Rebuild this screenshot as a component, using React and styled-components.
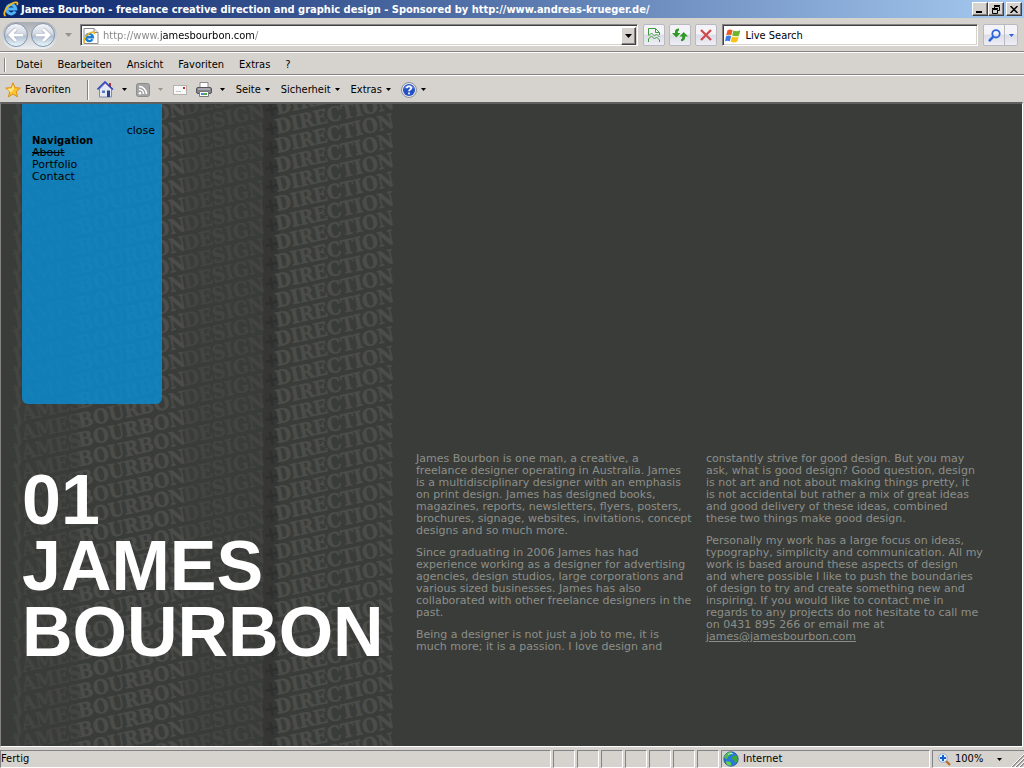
import React from "react";
import styled, { createGlobalStyle } from "styled-components";

const GlobalStyle = createGlobalStyle`
  * {
    box-sizing: border-box;
  }
  body {
    margin: 0;
    background: #d6d3ce;
    font-family: Tahoma, "DejaVu Sans Condensed", "DejaVu Sans", sans-serif;
    font-size: 11px;
    line-height: 14px;
    color: #000;
  }
  button, input {
    font: inherit;
    color: inherit;
    padding: 0;
    border: 0;
    background: none;
    border-radius: 0;
  }
  svg {
    display: block;
    flex: none;
  }
`;

const Window = styled.div`
  display: flex;
  flex-direction: column;
  min-height: 100vh;
`;

// ---------- title bar ----------

const TitleBar = styled.header`
  display: flex;
  align-items: center;
  gap: 2px;
  height: 18px;
  padding: 0 2px 0 3px;
  background: linear-gradient(90deg, #0a246a, #a6caf0);
  color: #fff;
`;

const Title = styled.h1`
  flex: 1;
  margin: 0;
  padding-top: 1px;
  font-size: 11px;
  font-weight: bold;
  white-space: nowrap;
`;

const CaptionButton = styled.button`
  display: flex;
  align-items: center;
  justify-content: center;
  width: 16px;
  height: 14px;
  margin-left: ${(props) => (props.$spaced ? "0" : "-2px")};
  background: #d6d3ce;
  border: 1px solid;
  border-color: #fff #404040 #404040 #fff;
  box-shadow: inset -1px -1px 0 #848284;
`;

// ---------- address row ----------

const AddressRow = styled.div`
  display: flex;
  align-items: center;
  gap: 4px;
  height: 35px;
  padding: 0 6px 0 2px;
  border-bottom: 1px solid #fff;
  box-shadow: inset 0 -1px 0 #848284;
`;

const TravelButtons = styled.div`
  display: flex;
  align-items: center;
  gap: 1px;
  height: 27px;
  padding: 0 1px;
  border-radius: 14px;
  background: linear-gradient(#a9adb3, #eceef0);
`;

const TravelButton = styled.button`
  width: 26px;
  height: 26px;
`;

const FieldBox = styled.div`
  display: flex;
  align-items: center;
  gap: 4px;
  flex: ${(props) => props.$grow};
  min-width: 0;
  height: 22px;
  margin: 0 1px;
  padding: 1px 1px 0 2px;
  background: #fff;
  border: 1px solid;
  border-color: #848284 #fff #fff #848284;
  box-shadow: inset 1px 1px 0 #404040, inset -1px -1px 0 #d6d3ce;
`;

const FieldInput = styled.input`
  flex: 1;
  min-width: 0;
  height: 16px;
  outline: none;
`;

// host name is black, the rest of the address is grey
const UrlInput = styled(FieldInput)`
  background: linear-gradient(
    90deg,
    #848284 58px,
    #000 58px,
    #000 151px,
    #848284 151px
  );
  background-clip: text;
  -webkit-background-clip: text;
  -webkit-text-fill-color: transparent;
`;

const DropButton = styled.button`
  display: flex;
  align-items: center;
  justify-content: center;
  width: 15px;
  height: 18px;
  background: #d6d3ce;
  border: 1px solid;
  border-color: #fff #404040 #404040 #fff;
  box-shadow: inset -1px -1px 0 #848284;
`;

const ToolButton = styled.button`
  display: flex;
  align-items: center;
  justify-content: center;
  width: 22px;
  height: 22px;
  border: 1px solid #b9b9c4;
  border-radius: 2px;
  background: linear-gradient(#f4f4f8 45%, #dddde8 50%, #eeeef4);
`;

const SearchButtons = styled.div`
  display: flex;
  button:first-child {
    border-radius: 2px 0 0 2px;
  }
  button:last-child {
    width: 14px;
    margin-left: -1px;
    border-radius: 0 2px 2px 0;
  }
`;

const ArrowButton = styled.button`
  display: flex;
  align-items: center;
  justify-content: center;
  width: ${(props) => props.$width || 22}px;
  height: 20px;
  margin-right: ${(props) => props.$after || 0}px;
`;

// ---------- menu and command bar ----------

const MenuBar = styled.nav`
  display: flex;
  align-items: center;
  gap: 15px;
  height: 23px;
  padding: 1px 0 0 4px;
  border-bottom: 1px solid #fff;
  box-shadow: inset 0 -1px 0 #848284;
`;

const Grip = styled.span`
  width: 2px;
  height: ${(props) => props.$height}px;
  margin-right: ${(props) => props.$after}px;
  border-left: 1px solid #848284;
  border-right: 1px solid #fff;
`;

const CommandBar = styled.div`
  display: flex;
  align-items: center;
  height: 26px;
  padding: 1px 0 0 5px;
`;

const CommandButton = styled.button`
  display: flex;
  align-items: center;
  gap: 4px;
  height: 20px;
  margin-right: ${(props) => props.$after || 0}px;
  white-space: nowrap;
`;

// ---------- web page ----------

const Page = styled.main`
  position: relative;
  display: flex;
  align-items: flex-start;
  flex: 1;
  overflow: hidden;
  margin-right: 1px;
  border: 1px solid;
  border-width: 2px 1px 1px;
  border-color: #606060 #fff #fff #848284;
  background: #3a3c39;
  font-family: Verdana, "DejaVu Sans", sans-serif;
  font-size: 11px;
  line-height: 12px;
`;

const PatternSvg = styled.svg`
  position: absolute;
  top: 0;
  left: 0;
  width: 400px;
  height: 100%;
  font-family: "DejaVu Serif Condensed", "DejaVu Serif", serif;
  font-size: 20px;
  font-weight: bold;
`;

const Intro = styled.section`
  position: relative;
  width: 392px;
  flex: none;
  padding-left: 21px;
`;

const NavPanel = styled.nav`
  width: 140px;
  height: 300px;
  padding: 21px 7px 0 10px;
  border-radius: 0 0 6px 6px;
  background: rgba(7, 143, 215, 0.8);
`;

const CloseButton = styled.button`
  display: block;
  height: 12px;
  margin: 0 0 -2px auto;
`;

const NavTitle = styled.h2`
  margin: 0;
  font-size: 10px;
`;

const NavLink = styled.a`
  display: block;
  color: #000;
  text-decoration: ${(props) => (props.$current ? "line-through" : "none")};
`;

const Headline = styled.h2`
  margin: 63px 0 0;
  font-family: Helvetica, "Liberation Sans", Arial, sans-serif;
  font-size: 70px;
  line-height: 66px;
  font-weight: bold;
  color: #fff;
  white-space: pre-line;
`;

const About = styled.article`
  position: relative;
  display: flex;
  gap: 14px;
  padding: 349px 0 40px 23px;
  color: #8c8f89;
`;

const Column = styled.div`
  width: 276px;
  a {
    color: inherit;
  }
`;

const Paragraph = styled.p`
  margin: 0 0 10px;
  white-space: pre;
`;

// ---------- status bar ----------

const StatusBar = styled.footer`
  display: flex;
  gap: 2px;
  height: 21px;
  padding-top: 3px;
`;

const StatusPane = styled.div`
  display: flex;
  align-items: center;
  gap: 4px;
  width: ${(props) => (props.$width ? props.$width + "px" : "auto")};
  flex: ${(props) => (props.$width ? "none" : "1")};
  padding-left: ${(props) => props.$pad || 0}px;
  border: 1px solid;
  border-color: #848284 #fff #fff #848284;
`;

const ZoomPane = styled(StatusPane)`
  position: relative;
  border-right: 0;
  button {
    margin-left: 8px;
  }
`;

const SizeGrip = styled.svg`
  position: absolute;
  right: 0;
  bottom: 0;
`;

// ---------- icons ----------

const Caret = ({ color = "#000", big }) => (
  <svg width={big ? 7 : 5} height={big ? 4 : 3} viewBox={big ? "0 0 7 4" : "0 0 5 3"}>
    <path d={big ? "M0 0h7L3.5 4z" : "M0 0h5L2.5 3z"} fill={color} />
  </svg>
);

const IeIcon = ({ size = 16, page }) => (
  <svg width={size} height={size} viewBox="0 0 16 16">
    {page && <path d="M1 .5h10l4 4v11H1z" fill="#fff" stroke="#8a8a8a" />}
    {page && <path d="M11 .5v4h4" fill="#e8e8e8" stroke="#8a8a8a" />}
    <g transform={page ? "translate(0 3) scale(.78)" : undefined}>
      <path
        d="M12.2 10.600A4.600 4.600 0 1 1 12.800 8H4.400"
        fill="none"
        stroke={page ? "#1b7fd6" : "#4fb4f5"}
        strokeWidth="3"
      />
      <path
        d="M2.500 15C-.5 13 3 5.500 9 2.500c4-2 6.500-1.500 5 1.500"
        fill="none"
        stroke="#f7b81c"
        strokeWidth="1.800"
      />
    </g>
  </svg>
);

const TravelIcon = ({ back }) => (
  <svg width="26" height="26" viewBox="0 0 26 26">
    <defs>
      <linearGradient id={back ? "tb" : "tf"} x1="0" y1="0" x2="0" y2="1">
        <stop offset="0" stopColor="#f4f6fa" />
        <stop offset=".45" stopColor="#d3d8e1" />
        <stop offset=".55" stopColor="#b3bfd0" />
        <stop offset="1" stopColor="#eafaff" />
      </linearGradient>
    </defs>
    <circle cx="13" cy="13" r="11.500" fill={`url(#${back ? "tb" : "tf"})`} stroke="#8294ac" />
    <g transform={back ? undefined : "matrix(-1 0 0 1 26 0)"}>
      <path
        d="M13 7l-6 6 6 6M7.500 13H20"
        fill="none"
        stroke="#94a2b8"
        strokeWidth="4"
      />
      <path d="M13 7l-6 6 6 6M7.500 13H20" fill="none" stroke="#fff" strokeWidth="3" />
    </g>
  </svg>
);

const BrokenPageIcon = () => (
  <svg width="12" height="14" viewBox="0 0 12 14" fill="none" stroke="#3f9c3f">
    <path d="M.5 7V.5h7l4 4V7M7.500 .5v4h4" />
    <path d="M.5 8l3-3 3 3 2-2 3 3M.5 11l3-3 3 3 2-2 3 3v2.500H.5z" />
  </svg>
);

const RefreshIcon = () => (
  <svg width="16" height="14" viewBox="0 0 16 14" fill="#2c9a24">
    <path d="M0 5h3V3.500C3 1.500 4.500.5 7 .5v2.300C6 2.800 5.800 3 5.800 4v1H8.500L4.300 9.500z" />
    <path d="M16 8.500h-3V10c0 2-1.500 3.200-4 3.200v-2.300c1 0 1.200-.3 1.200-1.200V8.500H7.500L11.700 4z" />
  </svg>
);

const StopIcon = () => (
  <svg width="12" height="12" viewBox="0 0 12 12">
    <path d="M1 1l10 10M11 1L1 11" stroke="#cf4a4a" strokeWidth="2.300" />
  </svg>
);

const WindowsIcon = () => (
  <svg width="16" height="14" viewBox="0 0 16 14">
    <path d="M2.500 1.200C4.500 0 6 .3 7.600 1.200L6.300 6.300C4.600 5.500 3 5.500 1.200 6.300z" fill="#ee5a24" />
    <path d="M8.400 1.500c2 1 4.200 1 7-.2L14 6.500c-2.400 1.200-4.800 1-6.800.1z" fill="#6fb52c" />
    <path d="M1 7.200c2-.9 3.500-.8 5.200 0L4.800 12.300C3.200 11.500 1.500 11.600 0 12.300z" fill="#3a7de0" />
    <path d="M7 7.600c2 1 4.300 1 6.800-.1l-1.400 5c-2.400 1.200-4.600 1.200-6.700.2z" fill="#fbc21b" />
  </svg>
);

const SearchIcon = () => (
  <svg width="13" height="13" viewBox="0 0 13 13" fill="none" stroke="#2a63dd">
    <circle cx="8" cy="4.800" r="3.700" strokeWidth="1.800" />
    <path d="M5.300 7.700L1 12.200" strokeWidth="2.400" />
  </svg>
);

const StarIcon = () => (
  <svg width="16" height="16" viewBox="0 0 16 16">
    <path
      d="M8 .8l2 4.900 5.300.4-4.100 3.400 1.400 5.400L8 12l-4.600 2.900 1.400-5.400L.7 6.100 6 5.700z"
      fill="#fcc52f"
      stroke="#dc8f14"
    />
    <path d="M8 3l1 3.500-3 4-1-1-3-2.600 4.600-.4z" fill="#ffe88a" />
  </svg>
);

const HomeIcon = () => (
  <svg width="17" height="17" viewBox="0 0 17 17">
    <path d="M12 2h2v4h-2z" fill="#a33" />
    <path d="M2.500 8l6-6 6 6v8h-12z" fill="#e6e9f4" stroke="#7f88a8" />
    <path d="M.5 8.500L8 1l8 7.500" fill="none" stroke="#2f46c0" strokeWidth="1.600" />
    <path d="M5 9.500h3V12H5z" fill="#557ab8" />
    <path d="M10 9.500h3V16h-3z" fill="#27408c" />
  </svg>
);

const RssIcon = () => (
  <svg width="14" height="14" viewBox="0 0 14 14">
    <rect x=".5" y=".5" width="13" height="13" rx="2" fill="#a4a4a4" stroke="#8c8c8c" />
    <circle cx="4" cy="10.300" r="1.300" fill="#fff" />
    <path d="M3 6.500a4.500 4.500 0 0 1 4.500 4.500M3 3.500A7.500 7.500 0 0 1 10.500 11" fill="none" stroke="#fff" strokeWidth="1.500" />
  </svg>
);

const MailIcon = () => (
  <svg width="14" height="10" viewBox="0 0 14 10">
    <rect x=".5" y=".5" width="13" height="9" fill="#f8f8f8" stroke="#b4b0aa" />
    <path d="M10 2h2v2h-2z" fill="#d8232a" />
    <path d="M3 6.500h5" stroke="#c6c6c6" />
  </svg>
);

const PrinterIcon = () => (
  <svg width="16" height="15" viewBox="0 0 16 15">
    <path d="M4 .5h8V6H4z" fill="#fff" stroke="#8c8c8c" />
    <rect x=".5" y="5.500" width="15" height="6" rx="1.500" fill="#83858a" stroke="#55575c" />
    <path d="M2 7h12" stroke="#c9cbd0" />
    <path d="M3.500 9.500h9v5h-9z" fill="#fff" stroke="#77797e" />
    <path d="M5 11h3v2H5z" fill="#3f8fd8" />
    <path d="M8 11h3v2H8z" fill="#58a84a" />
  </svg>
);

const HelpIcon = () => (
  <svg width="16" height="16" viewBox="0 0 16 16">
    <circle cx="8" cy="8" r="7.500" fill="#e4e6ec" stroke="#8d929c" />
    <circle cx="8" cy="8" r="6" fill="#2451c4" />
    <path d="M3 6.500a5.500 5.500 0 0 1 10 0c-3-1-7-1-10 0z" fill="#7198ea" />
    <path d="M5.800 6.200C6 3.500 10.500 3.700 10.200 6.300 10 7.600 8 7.600 8 9.300" fill="none" stroke="#fff" strokeWidth="1.700" />
    <path d="M7.100 10.500h1.800v1.800H7.100z" fill="#fff" />
  </svg>
);

const GlobeIcon = () => (
  <svg width="16" height="16" viewBox="0 0 16 16">
    <circle cx="8" cy="8" r="7.200" fill="#2a78d8" stroke="#1c4f9a" strokeWidth=".8" />
    <path d="M3 3c2-2 5-2.500 6-1.500L8 4 5.500 5 4 8 1.300 7C1.300 5 2 4 3 3z" fill="#4fc044" />
    <path d="M9 6l4-2c2 2 2 5 1 7l-2 1-1-3-2-1z" fill="#3aa83a" />
    <path d="M3.500 10l4 1 1 3.500c-2 .5-4.500-.5-5.500-2z" fill="#63cf4b" />
    <path d="M5 3.500c2-1.500 4-1.500 5-.5" fill="none" stroke="#bfeaff" />
  </svg>
);

const ZoomIcon = () => (
  <svg width="13" height="13" viewBox="0 0 13 13">
    <path d="M7.500 7.500l4.500 4.500" stroke="#b7722e" strokeWidth="2.400" />
    <circle cx="5" cy="5" r="4.300" fill="#e7f3ff" stroke="#98acc6" />
    <path d="M5 2v6M2 5h6" stroke="#1560d0" strokeWidth="2" />
  </svg>
);

// slanted line of words, repeated down the page
const WORDS = [
  { text: "JAMES", x: 0, color: "#444542" },
  { text: "BOURBON", x: 66, color: "#4c4d4a" },
  { text: "DESIGN", x: 174, color: "#444542" },
  { text: "+", x: 256, color: "#2e2f2e" },
  { text: "DIRECTION", x: 268, color: "#4c4d4a" },
];
const ROW_STEP = 19.345;
const ROWS = Array.from({ length: 60 }, (_, i) => 9 + i * ROW_STEP);

const Pattern = () => (
  <PatternSvg aria-hidden="true">
    <rect x="262" y="0" width="16" height="100%" fill="#363735" />
    {ROWS.map((y) => (
      <text key={y} transform={`translate(14 ${y}) rotate(-12.200)`}>
        {WORDS.map((word) => (
          <tspan
            key={word.text}
            x={word.x}
            fill={word.color}
            stroke={word.color}
            strokeWidth=".5"
          >
            {word.text}
          </tspan>
        ))}
      </text>
    ))}
  </PatternSvg>
);

const MENUS = ["Datei", "Bearbeiten", "Ansicht", "Favoriten", "Extras", "?"];

const App = () => {
  return (
    <>
      <GlobalStyle />
      <Window>
        <TitleBar>
          <IeIcon />
          <Title>
            James Bourbon - freelance creative direction and graphic design -
            Sponsored by http://www.andreas-krueger.de/
          </Title>
          <CaptionButton aria-label="Minimieren">
            <svg width="10" height="8" viewBox="0 0 10 8">
              <path d="M1 6h6v2H1z" />
            </svg>
          </CaptionButton>
          <CaptionButton aria-label="Wiederherstellen">
            <svg width="10" height="9" viewBox="0 0 10 9" fill="none" stroke="#000">
              <path d="M3.500 3V1.500h5v4H7M3 .5h6M1.500 4.500h5v4h-5zM1 3.500h6" />
            </svg>
          </CaptionButton>
          <CaptionButton $spaced aria-label="Schließen">
            <svg width="8" height="7" viewBox="0 0 8 7">
              <path d="M.5 0l7 7M7.500 0l-7 7" stroke="#000" strokeWidth="1.500" />
            </svg>
          </CaptionButton>
        </TitleBar>

        <AddressRow>
          <TravelButtons>
            <TravelButton aria-label="Zurück">
              <TravelIcon back />
            </TravelButton>
            <TravelButton aria-label="Vorwärts">
              <TravelIcon />
            </TravelButton>
          </TravelButtons>
          <ArrowButton $width={14} aria-label="Verlauf">
            <Caret big color="#97948f" />
          </ArrowButton>
          <FieldBox $grow="561 1 0">
            <IeIcon page />
            <UrlInput aria-label="Adresse" defaultValue="http://www.jamesbourbon.com/" />
            <DropButton aria-label="Adressen anzeigen">
              <Caret big />
            </DropButton>
          </FieldBox>
          <ToolButton aria-label="Kompatibilitätsansicht">
            <BrokenPageIcon />
          </ToolButton>
          <ToolButton aria-label="Aktualisieren">
            <RefreshIcon />
          </ToolButton>
          <ToolButton aria-label="Stopp">
            <StopIcon />
          </ToolButton>
          <FieldBox $grow="254 1 0">
            <WindowsIcon />
            <FieldInput aria-label="Suche" defaultValue="Live Search" />
          </FieldBox>
          <SearchButtons>
            <ToolButton aria-label="Suchen">
              <SearchIcon />
            </ToolButton>
            <ToolButton aria-label="Suchoptionen">
              <Caret color="#2a63dd" />
            </ToolButton>
          </SearchButtons>
        </AddressRow>

        <MenuBar>
          <Grip $height={14} $after={-5} />
          {MENUS.map((menu) => (
            <CommandButton key={menu}>{menu}</CommandButton>
          ))}
        </MenuBar>

        <CommandBar>
          <CommandButton $after={16}>
            <StarIcon />
            Favoriten
          </CommandButton>
          <Grip $height={20} $after={8} />
          <ArrowButton $width={17} aria-label="Startseite">
            <HomeIcon />
          </ArrowButton>
          <ArrowButton aria-label="Startseiten">
            <Caret />
          </ArrowButton>
          <ArrowButton $width={14} aria-label="Feeds">
            <RssIcon />
          </ArrowButton>
          <ArrowButton aria-label="Feedliste">
            <Caret color="#97948f" />
          </ArrowButton>
          <ArrowButton $width={16} aria-label="E-Mail lesen">
            <MailIcon />
          </ArrowButton>
          <ArrowButton $width={32} aria-label="Drucken">
            <PrinterIcon />
          </ArrowButton>
          <ArrowButton $width={5} $after={11} aria-label="Druckoptionen">
            <Caret />
          </ArrowButton>
          <CommandButton $after={11}>
            Seite <Caret />
          </CommandButton>
          <CommandButton $after={11}>
            Sicherheit <Caret />
          </CommandButton>
          <CommandButton $after={10}>
            Extras <Caret />
          </CommandButton>
          <CommandButton aria-label="Hilfe">
            <HelpIcon />
            <Caret />
          </CommandButton>
        </CommandBar>

        <Page>
          <Pattern />
          <Intro>
            <NavPanel>
              <CloseButton>close</CloseButton>
              <NavTitle>Navigation</NavTitle>
              <NavLink href="#about" $current>
                About
              </NavLink>
              <NavLink href="#portfolio">Portfolio</NavLink>
              <NavLink href="#contact">Contact</NavLink>
            </NavPanel>
            <Headline>{"01\nJAMES\nBOURBON"}</Headline>
          </Intro>
          <About id="about">
            <Column>
              <Paragraph>{`James Bourbon is one man, a creative, a
freelance designer operating in Australia. James
is a multidisciplinary designer with an emphasis
on print design. James has designed books,
magazines, reports, newsletters, flyers, posters,
brochures, signage, websites, invitations, concept
designs and so much more.`}</Paragraph>
              <Paragraph>{`Since graduating in 2006 James has had
experience working as a designer for advertising
agencies, design studios, large corporations and
various sized businesses. James has also
collaborated with other freelance designers in the
past.`}</Paragraph>
              <Paragraph>{`Being a designer is not just a job to me, it is
much more; it is a passion. I love design and`}</Paragraph>
            </Column>
            <Column>
              <Paragraph>{`constantly strive for good design. But you may
ask, what is good design? Good question, design
is not art and not about making things pretty, it
is not accidental but rather a mix of great ideas
and good delivery of these ideas, combined
these two things make good design.`}</Paragraph>
              <Paragraph>
                {`Personally my work has a large focus on ideas,
typography, simplicity and communication. All my
work is based around these aspects of design
and where possible I like to push the boundaries
of design to try and create something new and
inspiring. If you would like to contact me in
regards to any projects do not hesitate to call me
on 0431 895 266 or email me at
`}
                <a href="mailto:james@jamesbourbon.com">james@jamesbourbon.com</a>
              </Paragraph>
            </Column>
          </About>
        </Page>

        <StatusBar>
          <StatusPane>Fertig</StatusPane>
          {[1, 2, 3, 4, 5, 6, 7].map((n) => (
            <StatusPane key={n} $width={22} />
          ))}
          <StatusPane $width={209} $pad={1}>
            <GlobeIcon />
            Internet
          </StatusPane>
          <ZoomPane $width={92} $pad={5}>
            <ZoomIcon />
            100%
            <ArrowButton $width={8} aria-label="Zoomstufe">
              <Caret />
            </ArrowButton>
            <SizeGrip width="13" height="13" viewBox="0 0 13 13">
              <path d="M1 13L13 1M5 13l8-8M9 13l4-4" stroke="#848284" strokeWidth="1.500" />
              <path d="M0 13L13 0M4 13l9-9M8 13l5-5" stroke="#fff" />
            </SizeGrip>
          </ZoomPane>
        </StatusBar>
      </Window>
    </>
  );
};

export default App;
